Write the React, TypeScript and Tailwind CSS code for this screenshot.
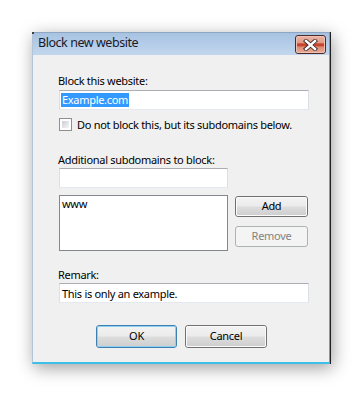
import React from "react";

const font = { fontFamily: '"Noto Sans", "Open Sans", sans-serif' };

function TextBox({ w, children }: { w: string; children?: React.ReactNode }) {
  return (
    <div
      className={`${w} h-[20px] bg-white border border-t-[#abadb3] border-l-[#dbdfe6] border-r-[#dbdfe6] border-b-[#e3e9ef] flex items-center pl-[1px] text-black leading-none`}
    >
      {children}
    </div>
  );
}

function Btn({
  children,
  kind = "normal",
  w = "w-[81px]",
  h = "h-[23px]",
}: {
  children: React.ReactNode;
  kind?: "normal" | "default" | "disabled";
  w?: string;
  h?: string;
}) {
  if (kind === "disabled") {
    return (
      <div
        className={`${w} ${h} rounded-[3px] border border-[#adb2b5] bg-[#f4f4f4] flex items-center justify-center text-[#838383]`}
      >
        {children}
      </div>
    );
  }
  const border = kind === "default" ? "border-[#3c7fb1]" : "border-[#707070]";
  const inner = kind === "default" ? "border-[#8ed0f2]" : "border-[#fbfbfb]";
  return (
    <div className={`${w} ${h} rounded-[3px] border ${border} p-0`}>
      <div
        className={`w-full h-full rounded-[2px] border ${inner} bg-[linear-gradient(to_bottom,#f2f2f2_0%,#ebebeb_48%,#dddddd_52%,#cfcfcf_100%)] flex items-center justify-center text-black`}
      >
        {children}
      </div>
    </div>
  );
}

export default function App() {
  return (
    <div className="w-[363px] h-[396px] bg-white pl-[32px] pt-[32px]" style={font}>
      <div className="w-[299px] h-[332px] shadow-[2px_4px_16px_rgba(0,0,0,0.38)]">
        <div className="w-full h-full flex flex-col border-r border-r-[#202020]">
          <div className="flex-1 flex flex-col border-l border-l-[#b4c4d8] border-r border-r-[#3ab6e2] border-b-2 border-b-[#3cc0e8]">
            {/* Title bar */}
            <div className="h-[23px] flex items-center justify-between bg-[linear-gradient(to_bottom,#a7c2e2,#c2d7ee)] border-t border-t-[#8ea6c2] relative">
              <div className="absolute left-[-1px] top-[-1px] w-[2px] h-[2px] bg-[#404040]" />
              <span className="pl-[5px] text-[12.5px] tracking-[-0.45px] text-[#1a1a2a] leading-none mt-[-1px]">
                Block new website
              </span>
              <div className="mr-[3px] mt-[1px] w-[31px] h-[19px] rounded-[3px] border border-[#4b2a28] overflow-hidden">
                <div className="w-full h-full rounded-[2px] border border-[#f0c0b2] bg-[linear-gradient(to_bottom,#eab09f_0%,#e09a86_40%,#c9442c_45%,#c9442c_60%,#dc8a72_65%,#e6a894_100%)] flex items-center justify-center">
                  <svg width="17" height="12" viewBox="0 0 17 12">
                    <path
                      d="M4 2 L13 10 M13 2 L4 10"
                      stroke="#3a2a2a"
                      strokeWidth="4.2"
                      strokeLinecap="square"
                    />
                    <path
                      d="M4 2 L13 10 M13 2 L4 10"
                      stroke="#ffffff"
                      strokeWidth="2.4"
                      strokeLinecap="square"
                    />
                  </svg>
                </div>
              </div>
            </div>

            {/* Body */}
            <div className="flex-1 bg-[#f0f0f0] pl-[25px] pt-[18px] text-[11px] tracking-[-0.3px] text-black">
              <div className="h-[16px] leading-[16px]">Block this website:</div>
              <div className="mt-[1px] ml-[1px]">
                <TextBox w="w-[250px]">
                  <span className="bg-[#3399ff] text-white leading-[14px] px-[1px]">Example.com</span>
                </TextBox>
              </div>
              <div className="mt-[8px] ml-[1px] flex items-center h-[13px]">
                <div className="w-[13px] h-[13px] border border-[#8f8f8f] bg-white p-[2px]">
                  <div className="w-full h-full bg-[linear-gradient(135deg,#cbcfd5,#f6f6f6)]" />
                </div>
                <span className="ml-[5px] leading-none">Do not block this, but its subdomains below.</span>
              </div>

              <div className="mt-[21px] h-[16px] leading-[16px]">Additional subdomains to block:</div>
              <div className="ml-[1px]">
                <TextBox w="w-[169px]" />
              </div>

              <div className="mt-[7px] ml-[1px] flex">
                <div className="w-[169px] h-[56px] bg-white border border-[#828790] pl-[2px] pt-[1px] leading-[14px]">
                  www
                </div>
                <div className="ml-[7px] mt-[1px] flex flex-col">
                  <Btn w="w-[73px]" h="h-[21px]">Add</Btn>
                  <div className="mt-[9px]">
                    <Btn kind="disabled" w="w-[73px]" h="h-[21px]">
                      Remove
                    </Btn>
                  </div>
                </div>
              </div>

              <div className="mt-[16px] h-[16px] leading-[16px]">Remark:</div>
              <div className="ml-[1px]">
                <TextBox w="w-[250px]">
                  <span className="pl-[1px]">This is only an example.</span>
                </TextBox>
              </div>

              <div className="mt-[22px] ml-[38px] flex gap-[8px]">
                <Btn kind="default" w="w-[81px]">OK</Btn>
                <Btn w="w-[82px]">Cancel</Btn>
              </div>
            </div>
          </div>
        </div>
      </div>
    </div>
  );
}
